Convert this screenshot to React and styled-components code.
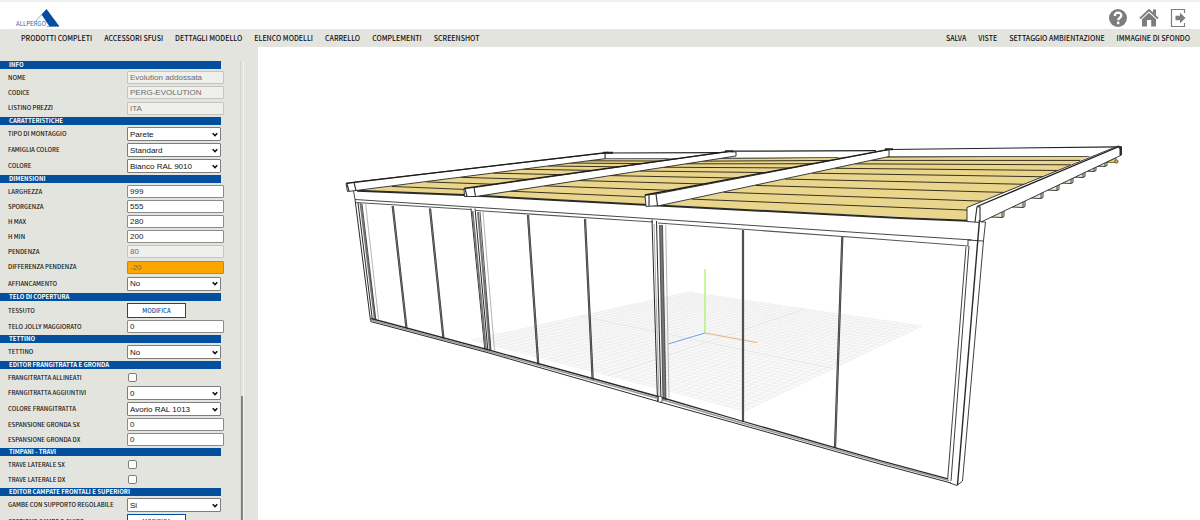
import React from 'react';
import styled, { createGlobalStyle } from 'styled-components';

const GlobalStyle = createGlobalStyle`
  * {
    box-sizing: border-box;
  }

  body {
    margin: 0;
    background: #fff;
    color: #111;
    font-family: 'Noto Sans CJK JP', 'Lato', sans-serif;
    font-size: 7px;
  }
`;

const Page = styled.div`
  display: flex;
  flex-direction: column;
  height: 100vh;
  overflow: hidden;
  border-top: 2px solid #f0f0f0;
`;

const Header = styled.header`
  display: flex;
  justify-content: space-between;
  align-items: center;
  flex: none;
  height: 27px;
  padding: 4px 10px 0 15px;
`;

const Logo = styled.svg`
  width: 46px;
  height: 20px;

  text {
    font-size: 6px;
    font-weight: 400;
    fill: #2f6cab;
  }
`;

const Tools = styled.div`
  display: flex;
  gap: 11px;
`;

const ToolButton = styled.button`
  display: flex;
  padding: 0;
  border: none;
  background: none;
  color: #7d7d7d;
  cursor: pointer;

  svg {
    width: 20px;
    height: 20px;
  }
`;

const Nav = styled.nav`
  display: flex;
  justify-content: space-between;
  align-items: center;
  flex: none;
  height: 18px;
  padding: 0 10px 0 21px;
  background: #e4e4df;
`;

const Menu = styled.div`
  display: flex;
  gap: 12px;
`;

const MenuLink = styled.a`
  color: #111;
  font-weight: 500;
  line-height: 10px;
  text-decoration: none;
  white-space: nowrap;
`;

const Main = styled.main`
  display: flex;
  flex: 1;
  min-height: 0;
`;

const Sidebar = styled.aside`
  display: flex;
  flex: none;
  width: 258px;
  padding-top: 14px;
  background: #e4e4df;
  overflow: hidden;
`;

const Panel = styled.form`
  width: 240px;
`;

const Track = styled.div`
  display: flex;
  align-items: flex-end;
  width: 4px;
  border-left: 1px solid #d6d6d2;
  border-right: 1px solid #f4f4f1;
`;

const Thumb = styled.div`
  width: 2px;
  height: 27%;
  background: #85857f;
`;

const SectionTitle = styled.h2`
  width: 221px;
  height: 8px;
  margin: 0;
  padding-left: 9px;
  background: #034f9d;
  color: #fff;
  font-size: 6px;
  font-weight: 700;
  line-height: 8px;
  white-space: nowrap;
`;

const SectionBody = styled.div`
  padding: 1px 0;
`;

const Row = styled.div`
  display: flex;
  align-items: center;
  height: ${({ $height }) => $height}px;
  padding-left: 8px;
`;

const Label = styled.label`
  width: 119px;
  font-size: 6px;
  font-weight: 500;
  line-height: 10px;
  white-space: nowrap;
`;

const TextInput = styled.input`
  width: 97px;
  height: 13px;
  padding: 0 2px;
  border: 1px solid #8b8b8b;
  border-radius: 1px;
  background: ${({ $warning }) => ($warning ? '#ffa500' : '#fff')};
  color: #222;
  font-family: 'Liberation Sans', Arial, sans-serif;
  font-size: 8px;

  &:disabled {
    border-color: ${({ $warning }) => ($warning ? '#b98a3a' : '#c4c4c0')};
    background: ${({ $warning }) => ($warning ? '#ffa500' : '#efefec')};
    color: #6b6b6b;
  }
`;

const SelectBox = styled.div`
  display: grid;
  align-items: center;
  width: 94px;

  > * {
    grid-area: 1 / 1;
  }

  svg {
    justify-self: end;
    width: 6px;
    height: 5px;
    margin-right: 3px;
    pointer-events: none;
  }
`;

const SelectInput = styled.select`
  appearance: none;
  width: 100%;
  height: 14px;
  padding: 0 2px;
  border: 1px solid #7d7d7d;
  border-radius: 1px;
  background: #fff;
  color: #111;
  font-family: 'Liberation Sans', Arial, sans-serif;
  font-size: 8px;
`;

const Checkbox = styled.input`
  appearance: none;
  width: 9px;
  height: 9px;
  margin: 0 0 0 1px;
  border: 1px solid #7d7d7d;
  border-radius: 2px;
  background: #fff;

  &:checked {
    background: #034f9d;
  }
`;

const EditButton = styled.button`
  width: 59px;
  height: 15px;
  padding: 0;
  border: 1px solid #034f9d;
  background: #fff;
  color: #034f9d;
  font-family: inherit;
  font-size: 6px;
  font-weight: 500;
  line-height: 10px;
  cursor: pointer;
`;

const Viewport = styled.section`
  flex: 1;
  min-width: 0;

  svg {
    display: block;
    width: 100%;
    height: 100%;
  }
`;

const leftMenu = [
  'PRODOTTI COMPLETI',
  'ACCESSORI SFUSI',
  'DETTAGLI MODELLO',
  'ELENCO MODELLI',
  'CARRELLO',
  'COMPLEMENTI',
  'SCREENSHOT',
];

const rightMenu = ['SALVA', 'VISTE', 'SETTAGGIO AMBIENTAZIONE', 'IMMAGINE DI SFONDO'];

const sections = [
  {
    title: 'INFO',
    fields: [
      { label: 'NOME', type: 'text', value: 'Evolution addossata', disabled: true, height: 15 },
      { label: 'CODICE', type: 'text', value: 'PERG-EVOLUTION', disabled: true, height: 15 },
      { label: 'LISTINO PREZZI', type: 'text', value: 'ITA', disabled: true, height: 16 },
    ],
  },
  {
    title: 'CARATTERISTICHE',
    fields: [
      { label: 'TIPO DI MONTAGGIO', type: 'select', value: 'Parete', height: 16 },
      { label: 'FAMIGLIA COLORE', type: 'select', value: 'Standard', height: 16 },
      { label: 'COLORE', type: 'select', value: 'Bianco RAL 9010', height: 16 },
    ],
  },
  {
    title: 'DIMENSIONI',
    fields: [
      { label: 'LARGHEZZA', type: 'text', value: '999', height: 15 },
      { label: 'SPORGENZA', type: 'text', value: '555', height: 15 },
      { label: 'H MAX', type: 'text', value: '280', height: 15 },
      { label: 'H MIN', type: 'text', value: '200', height: 15 },
      { label: 'PENDENZA', type: 'text', value: '80', disabled: true, height: 15 },
      { label: 'DIFFERENZA PENDENZA', type: 'text', value: '-20', disabled: true, warning: true, height: 16 },
      { label: 'AFFIANCAMENTO', type: 'select', value: 'No', height: 17 },
    ],
  },
  {
    title: 'TELO DI COPERTURA',
    fields: [
      { label: 'TESSUTO', type: 'button', value: 'MODIFICA', height: 17 },
      { label: 'TELO JOLLY MAGGIORATO', type: 'text', value: '0', height: 15 },
    ],
  },
  {
    title: 'TETTINO',
    fields: [{ label: 'TETTINO', type: 'select', value: 'No', height: 16 }],
  },
  {
    title: 'EDITOR FRANGITRATTA E GRONDA',
    fields: [
      { label: 'FRANGITRATTA ALLINEATI', type: 'checkbox', height: 15 },
      { label: 'FRANGITRATTA AGGIUNTIVI', type: 'select', value: '0', height: 16 },
      { label: 'COLORE FRANGITRATTA', type: 'select', value: 'Avorio RAL 1013', height: 16 },
      { label: 'ESPANSIONE GRONDA SX', type: 'text', value: '0', height: 15 },
      { label: 'ESPANSIONE GRONDA DX', type: 'text', value: '0', height: 15 },
    ],
  },
  {
    title: 'TIMPANI - TRAVI',
    fields: [
      { label: 'TRAVE LATERALE SX', type: 'checkbox', height: 15 },
      { label: 'TRAVE LATERALE DX', type: 'checkbox', height: 15 },
    ],
  },
  {
    title: 'EDITOR CAMPATE FRONTALI E SUPERIORI',
    fields: [
      { label: 'GAMBE CON SUPPORTO REGOLABILE', type: 'select', value: 'Si', height: 16 },
      { label: 'GESTIONE GAMBE E GUIDE', type: 'button', value: 'MODIFICA', height: 17 },
    ],
  },
];

const Control = ({ id, field }) => {
  if (field.type === 'select') {
    return (
      <SelectBox>
        <SelectInput id={id} defaultValue={field.value}>
          <option>{field.value}</option>
        </SelectInput>
        <svg viewBox="0 0 6 5" aria-hidden="true">
          <path d="M.7 1.2 3 3.6 5.3 1.2" fill="none" stroke="#111" strokeWidth="1.5" />
        </svg>
      </SelectBox>
    );
  }
  if (field.type === 'checkbox') {
    return <Checkbox id={id} type="checkbox" />;
  }
  if (field.type === 'button') {
    return <EditButton id={id} type="button">{field.value}</EditButton>;
  }
  return (
    <TextInput
      id={id}
      type="text"
      defaultValue={field.value}
      disabled={field.disabled}
      $warning={field.warning}
    />
  );
};

// Point at fraction t of the segment a-b
const mix = (a, b, t) => [a[0] + (b[0] - a[0]) * t, a[1] + (b[1] - a[1]) * t];

const line = (a, b) => `M${a[0]} ${a[1]}L${b[0]} ${b[1]}`;

// Ground grid corners: left, back, right, front
const ground = [[472, 340], [688, 292], [922, 326], [745, 411]];
const gridSteps = Array.from({ length: 41 }, (_, i) => i / 40);
const gridPath = gridSteps
  .map((t) => {
    const across = line(mix(ground[0], ground[1], t), mix(ground[3], ground[2], t));
    const along = line(mix(ground[0], ground[3], t), mix(ground[1], ground[2], t));
    return across + along;
  })
  .join('');

// Each bay: front left, back left, back right, front right
const bays = [
  [[357, 191], [605, 158.5], [700, 158.5], [464, 196]],
  [[476, 196.5], [720, 158.5], [860, 157], [645, 205]],
  [[660, 206], [887, 157], [1090, 156], [950, 219]],
];
const folds = [0.14, 0.28, 0.42, 0.55, 0.67, 0.77, 0.86, 0.93];

const brackets = [
  [1004, 217], [1025, 207], [1043, 198], [1059, 190], [1073, 183], [1085, 177], [1096, 171], [1107, 166],
];

const panes = [
  [[392.7, 206], [406.7, 330]],
  [[430, 208.5], [443.5, 339]],
  [[528, 215], [538.3, 365]],
  [[585, 219], [592.7, 380]],
  [[743, 230], [743, 422]],
  [[842.3, 237], [835, 448]],
];

const Scene = () => (
  <svg viewBox="258 47 942 473" preserveAspectRatio="xMidYMid meet" role="img" aria-label="Pergola">
    <polygon points={ground.join(' ')} fill="#fafafa" />
    <path d={gridPath} stroke="#e6e6e6" strokeWidth=".5" />
    <path d="M580 316 833 368.5M608 375.5 805 309" stroke="#e0e0e0" strokeWidth=".6" />
    <path d="M705 269V333" stroke="#a8f25a" strokeWidth="1.2" />
    <path d="M705 333 668 344" stroke="#6fa4dc" />
    <path d="M705 333 757 342.5" stroke="#eeb27c" />

    {/* fabric */}
    <path d="M940 219 967 221V206Z" fill="#e9d58c" />
    {bays.map(([fl, bl, br, fr]) => (
      <g key={fl[0]}>
        <polygon points={[fl, bl, br, fr].join(' ')} fill="#e9d58c" />
        <path d={line(bl, br)} stroke="#39321e" strokeWidth=".9" />
        <path
          d={folds.map((t) => line(mix(fl, bl, t), mix(fr, br, t))).join('')}
          stroke="#39321e"
          strokeWidth="1"
        />
      </g>
    ))}

    {/* back rail */}
    <path
      d="M605 153 700 153 731 151 889 149.5 1118 146.5V156L887 156.5 838 157.5 722 158.2 605 158.7Z"
      fill="#fff"
    />
    <path d="M605 153 720 152.7M731 151.2 876 150.6M889 149.5 1118 146.8" stroke="#222" strokeWidth="1.2" />
    <path d="M605 158.7 668 158.7M722 158.2 838 157.5M887 156.7 1088 156.5M605 153V159" stroke="#444" strokeWidth=".8" fill="none" />

    {/* brackets under the right beam */}
    {brackets.map(([x, y]) => (
      <path
        key={x}
        d={`M${x - 13} ${y}L${x - 2} ${y + 0.5}L${x} ${y - 0.5}V${y - 9}M${x - 2} ${y}V${y - 7}`}
        fill="#e9e8d8"
        stroke="#2c2c28"
        strokeWidth=".9"
      />
    ))}
    <path d="M1107 162.5 1116 162.5V158L1109 161Z" fill="#e6c95f" stroke="#56491f" strokeWidth=".7" />
    <circle cx="1116.5" cy="161.5" r="1.7" fill="#c9ae50" stroke="#333" strokeWidth=".6" />

    {/* front gutter beam */}
    <path d="M353.5 191 464 194.5 644 204 967 220.5 985 222 983.5 240.7 880 234 630 217.5 355 199.5Z" fill="#fff" />
    <path d="M357 190.8 464 195 630 204 900 218 967 220.8" fill="none" stroke="#2a2a26" strokeWidth="2" />
    <path d="M353.5 191 355 199.5 630 217.3 880 234 983.5 240.7" fill="none" stroke="#333" strokeWidth=".9" />
    <path d="M356 202.5 471 209.5M476 210.5 630 220.5 653 222M658 223 880 239.3 968 246V240" fill="none" stroke="#555" strokeWidth="1.1" />

    {/* rafters */}
    <g fill="#fff" stroke="#222" strokeWidth=".9" strokeLinejoin="round">
      <path d="M346 183.5 355 182 605 153V158.7L356 190.5 347.5 191.5Z" />
      <path d="M464 188.5 474 187.5 729 151.5 736 152V156L720 158.5 476 196.5 464.5 196.5Z" />
      <path d="M645 195 656 194 889 149.5V156.5L660 205.5 646 206.5Z" />
      <path d="M967 207.5 1118 146 1121.5 147V155L980 222.5 967 221.5Z" />
    </g>
    <path d="M346 183.3 608 152.3M464 188.3 729 151.3M645 195 889 149.3M977 206.5 1118 147" fill="none" stroke="#1c1c1c" strokeWidth="1.3" />
    <path d="M354 182.5 356 190.5M347 184 349 191M474 187.5 475.5 196.5M465 188.5 467 196.5M649 195V206M656 194 657.5 205.5M977 206.5 975 222M977 206.5 980 207V222" fill="none" stroke="#2a2a2a" strokeWidth="1.1" />
    <path d="M603 152.8H613M725 151.3H733M885 149.3H893" stroke="#222" strokeWidth="2" />
    <path d="M1117 146H1121.5V155L1119.5 155.5V149Z" fill="#2c2c2c" />

    {/* posts */}
    <g fill="none" stroke="#2a2a2a">
      <path d="M355 199.5 370.5 320.7M358 203 372.5 320.7" strokeWidth="1" />
      <path d="M360.5 203 375 320.7" stroke="#777" strokeWidth="2" />
      <path d="M362 204 376 321" strokeWidth=".8" />
      <path d="M365.7 204 378.5 319M483 212 494.5 350M665.7 225 669 398" stroke="#b5b5b5" strokeWidth="1" />
      <path d="M471 208.5 485 351.5M475 208.5 488 352" strokeWidth="1" />
      <path d="M472.5 211 486 350M478 212 490 350" stroke="#777" strokeWidth="2" />
      <path d="M480 212 491 351" strokeWidth=".8" />
      <path d="M652 219.5 657.5 401M656.5 221 661 401.5" strokeWidth="1" />
      <path d="M654 224 659 398" stroke="#aaa" strokeWidth="1" />
      <path d="M661 225 664.5 400" stroke="#777" strokeWidth="3" />
      <path d="M659.5 225 663 401M662.5 225 666 401" strokeWidth=".7" />
      <path d="M968.5 247 950.5 480 957 485.5 962.5 481 983.5 240.7 985 222 979 222" fill="#fff" stroke="none" />
      <path d="M966 247 947.7 479M969 246 951 481M981 222H985.5L983.5 240.7 962.5 481 957 485.5 950 483M968 240 983.5 241" strokeWidth=".9" />
      <path d="M979.5 220 957.5 485" strokeWidth="1.4" />
    </g>

    {/* sliding glass frames */}
    {panes.map(([a, b]) => (
      <g key={a[0]}>
        <path d={line(a, b)} stroke="#333" strokeWidth="2.2" />
        <path d={line(a, b)} stroke="#888" strokeWidth=".7" />
      </g>
    ))}

    {/* bottom rail */}
    <g fill="none" stroke="#2a2a2a">
      <path d="M371 318.5 487 349.5 658 396.5 740 420.5 880 460.5 948 479" strokeWidth="1.3" />
      <path d="M371 320 487 351 658 398.5 740 422.5 880 462 949 480.5" stroke="#999" strokeWidth="1.5" />
      <path d="M370.5 321.5 487 352.5 658 401.5 740 424.5 880 464 951 483" strokeWidth="1" />
    </g>
    <path d="M658.5 396V402H662V397Z" fill="#fff" stroke="#333" strokeWidth=".6" />
  </svg>
);

const App = () => {
  return (
    <>
      <GlobalStyle />
      <Page>
        <Header>
          <Logo viewBox="15 7 46 20" role="img" aria-label="Allpergo">
            <path d="M41.5 13.5 46.5 8 59.5 25.5H49.5Z" fill="#034f9d" />
            <path d="M43 12 36 20M47 25.5H59" fill="none" stroke="#5b8abc" strokeWidth=".7" />
            <text x="16" y="25">ALLPERGO</text>
          </Logo>
          <Tools>
            <ToolButton type="button" aria-label="Aiuto">
              <svg viewBox="0 0 20 20">
                <circle cx="10" cy="10" r="9" fill="currentColor" />
                <path d="M6.8 8C6.8 3.5 13.5 3.8 13.3 7.6 13.2 9.9 10.2 9.7 10.2 12.3" fill="none" stroke="#fff" strokeWidth="2.3" />
                <circle cx="10.2" cy="15" r="1.4" fill="#fff" />
              </svg>
            </ToolButton>
            <ToolButton type="button" aria-label="Home">
              <svg viewBox="0 0 20 20">
                <path d="M1 10.5 10 2 19 10.5" fill="none" stroke="currentColor" strokeWidth="1.8" />
                <path d="M14 1.5H17V7.5L14 4.8Z" fill="currentColor" />
                <path d="M3 11.3 10 4.8 17 11.3V18.5H12.2V12H8V18.5H3Z" fill="currentColor" />
              </svg>
            </ToolButton>
            <ToolButton type="button" aria-label="Esci">
              <svg viewBox="0 0 20 20">
                <path d="M14.5 5V1.5H1.5V18.5H14.5V15" fill="none" stroke="currentColor" strokeWidth="1.2" />
                <path d="M5.5 7.8H10V4.8L15.5 10 10 15.2V12.2H5.5Z" fill="currentColor" />
              </svg>
            </ToolButton>
          </Tools>
        </Header>
        <Nav>
          <Menu>
            {leftMenu.map((item) => (
              <MenuLink href="#" key={item}>{item}</MenuLink>
            ))}
          </Menu>
          <Menu>
            {rightMenu.map((item) => (
              <MenuLink href="#" key={item}>{item}</MenuLink>
            ))}
          </Menu>
        </Nav>
        <Main>
          <Sidebar>
            <Panel>
              {sections.map((section, s) => (
                <section key={section.title}>
                  <SectionTitle>{section.title}</SectionTitle>
                  <SectionBody>
                    {section.fields.map((field, f) => {
                      const id = `field-${s}-${f}`;
                      return (
                        <Row key={id} $height={field.height}>
                          <Label htmlFor={id}>{field.label}</Label>
                          <Control id={id} field={field} />
                        </Row>
                      );
                    })}
                  </SectionBody>
                </section>
              ))}
            </Panel>
            <Track>
              <Thumb />
            </Track>
          </Sidebar>
          <Viewport>
            <Scene />
          </Viewport>
        </Main>
      </Page>
    </>
  );
};

export default App;
